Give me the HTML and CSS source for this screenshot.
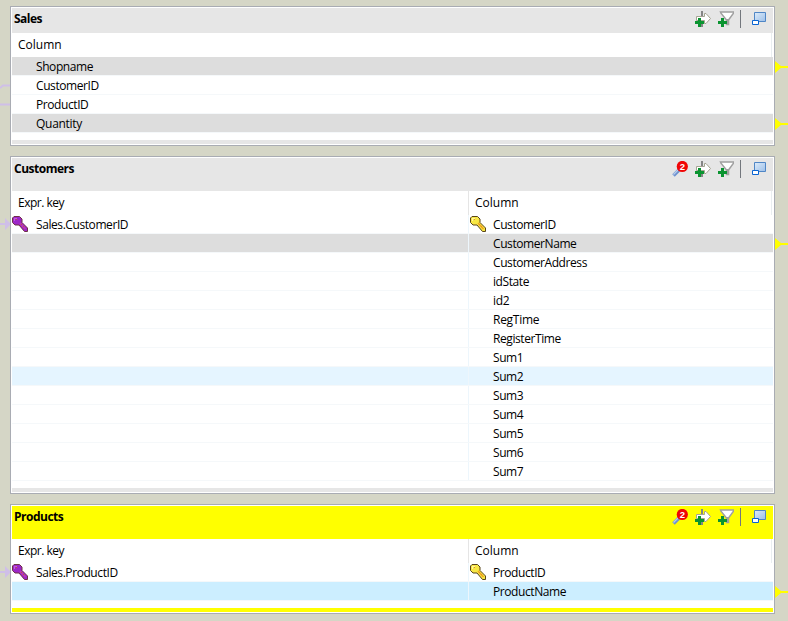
FILE: index.html
```html
<!DOCTYPE html>
<html lang="en">
<head>
<meta charset="utf-8">
<title>Tables</title>
<link rel="stylesheet" href="styles.css">
</head>
<body>
<svg class="defs" width="0" height="0">
  <defs>
    <linearGradient id="glass" x1="0" y1="0" x2="1" y2="1"><stop offset="0" stop-color="#dcebfa"/><stop offset="1" stop-color="#9dbfe8"/></linearGradient>
    <symbol id="plus" viewBox="0 0 9 9"><path d="M3 0h3v3h3v3H6v3H3V6H0V3h3z" fill="#0a9430"/></symbol>
    <symbol id="arrow" viewBox="0 0 16 16">
      <path d="M6 0h2v16H6z" fill="#858585"/>
      <path d="M1.500 5.500h8v-3h1.500l4.500 5-4.500 5H9.500v-3h-8z" fill="#fff" stroke="#a5a492"/>
      <use href="#plus" x="0" y="7" width="9" height="9"/>
    </symbol>
    <symbol id="filter" viewBox="0 0 16 16">
      <path d="M2.500 1h13v1.200L10.500 9v4.500H8.500V9L3 2.200z" fill="#fff" stroke="#a0a0a0" stroke-width="1.500"/>
      <path d="M8 8h3v6H8z" fill="#a0a0a0"/>
      <use href="#plus" x="0" y="7" width="9" height="9"/>
    </symbol>
    <symbol id="restore" viewBox="0 0 14 14">
      <path d="M2.500.5h11v9h-11z" fill="url(#glass)" stroke="#4f86c6"/>
      <path d="M.5 8.500h6v4h-6z" fill="#fff" stroke="#0a64d2"/>
    </symbol>
    <symbol id="search" viewBox="0 0 16 16">
      <path d="M1.500 14.500 7 9" stroke="#6f93cf" stroke-width="3.500"/>
      <path d="M1.500 13.500 6 9" stroke="#b9cdec" stroke-width="1.200"/>
      <circle cx="10.300" cy="5.500" r="5.600" fill="#f00505"/>
      <text x="10.300" y="8.800" class="count">2</text>
    </symbol>
    <symbol id="key" viewBox="0 0 16 16">
      <path d="M2 .5h5.500l2.500 2.500v3.500l5.500 5.500v3.500h-3L7 9H3L.5 6.500V2z" class="key-body"/>
      <path d="m8 7 5.500 6" class="key-shaft"/>
      <path d="M2 2h3v1H3v2H2z" class="key-shine"/>
      <path d="M4 3h1v1H4zM9 8h1v1H9zM11 10h1v1h-1z" class="key-dot"/>
    </symbol>
  </defs>
</svg>
<main class="canvas">
  <section class="panel">
    <header class="title"><h2>Sales</h2>
      <div class="tools"><svg class="ic"><use href="#arrow"/></svg><svg class="ic"><use href="#filter"/></svg><i class="sep"></i><svg class="ic win"><use href="#restore"/></svg></div>
    </header>
    <div class="heads"><span>Column</span></div>
    <div class="row sel"><span><b>Shopname</b></span><i class="out"></i></div>
    <div class="row"><span><b>CustomerID</b></span><svg class="wire" viewBox="0 0 10 8"><path d="M0 5 3 2.500h7"/></svg></div>
    <div class="row"><span><b>ProductID</b></span><svg class="wire" viewBox="0 0 10 8"><path d="M0 2.500h10"/></svg></div>
    <div class="row sel"><span><b class="loose">Quantity</b></span><i class="out"></i></div>
    <div class="foot"></div>
  </section>

  <section class="panel joined">
    <header class="title"><h2>Customers</h2>
      <div class="tools"><svg class="ic"><use href="#search"/></svg><svg class="ic"><use href="#arrow"/></svg><svg class="ic"><use href="#filter"/></svg><i class="sep"></i><svg class="ic win"><use href="#restore"/></svg></div>
    </header>
    <div class="heads"><span class="tight">Expr. key</span><span>Column</span></div>
    <div class="row"><span><svg class="key violet"><use href="#key"/></svg><b>Sales.CustomerID</b></span><span><svg class="key gold"><use href="#key"/></svg><b>CustomerID</b></span><i class="in"></i></div>
    <div class="row sel"><span></span><span><b>CustomerName</b></span><i class="out"></i></div>
    <div class="row"><span></span><span><b>CustomerAddress</b></span></div>
    <div class="row"><span></span><span><b>idState</b></span></div>
    <div class="row"><span></span><span><b class="loose">id2</b></span></div>
    <div class="row"><span></span><span><b class="loose">RegTime</b></span></div>
    <div class="row"><span></span><span><b>RegisterTime</b></span></div>
    <div class="row"><span></span><span><b>Sum1</b></span></div>
    <div class="row hover"><span></span><span><b>Sum2</b></span></div>
    <div class="row"><span></span><span><b>Sum3</b></span></div>
    <div class="row"><span></span><span><b>Sum4</b></span></div>
    <div class="row"><span></span><span><b>Sum5</b></span></div>
    <div class="row"><span></span><span><b>Sum6</b></span></div>
    <div class="row"><span></span><span><b>Sum7</b></span></div>
    <div class="foot"></div>
  </section>

  <section class="panel joined active">
    <header class="title"><h2>Products</h2>
      <div class="tools"><svg class="ic"><use href="#search"/></svg><svg class="ic"><use href="#arrow"/></svg><svg class="ic"><use href="#filter"/></svg><i class="sep"></i><svg class="ic win"><use href="#restore"/></svg></div>
    </header>
    <div class="heads"><span class="tight">Expr. key</span><span>Column</span></div>
    <div class="row"><span><svg class="key violet"><use href="#key"/></svg><b>Sales.ProductID</b></span><span><svg class="key gold"><use href="#key"/></svg><b>ProductID</b></span><i class="in"></i></div>
    <div class="row picked"><span></span><span><b>ProductName</b></span><i class="out"></i></div>
    <div class="foot"></div>
  </section>
</main>
</body>
</html>
```
FILE: styles.css
```css
* { box-sizing: border-box; }
body { margin: 0; background: #d5d6c6; font: 12px/18px "Open Sans", "Noto Sans", sans-serif; color: #000; overflow: hidden; }
.defs { display: block; position: absolute; }
.canvas { width: 788px; height: 621px; padding: 6px 13px 0 10px; display: flex; flex-direction: column; gap: 10px; overflow: hidden; }
.panel { --accent: #e6e6e6; background: #fff; border: 1px solid #a9acb3; padding: 1px; width: 765px; }
.active { --accent: #ffff00; }
.title { display: flex; justify-content: space-between; background: var(--accent); height: 25px; }
.joined .title { height: 33px; }
.title h2 { margin: 2px 0 0 2px; font-size: 12px; line-height: 18px; font-weight: 700; letter-spacing: -0.5px; }
.tools { display: flex; gap: 7px; padding: 3px 7px 0 0; }
.ic { width: 16px; height: 16px; display: block; }
.win { width: 14px; height: 14px; margin: 1px 0 0 4px; }
.count { font: 700 9.5px "Liberation Sans", sans-serif; fill: #fff; text-anchor: middle; }
.sep { width: 1px; height: 18px; background: #73777d; margin: -1px 0 0 -1px; }
.heads, .row { display: grid; grid-template-columns: 1fr; }
.joined .heads, .joined .row { grid-template-columns: 457px 1fr; }
.heads { height: 24px; margin-right: 1px; border-right: 1px solid #e9eef0; }
.heads span { padding: 3px 0 0 6px; }
.heads .tight { letter-spacing: -0.5px; }
.heads span + span { border-left: 1px solid #e5e5e5; margin-left: -1px; padding-left: 6px; }
.row { position: relative; height: 19px; border-bottom: 1px solid #f5f8fa; }
.row span { padding-left: 24px; height: 18px; position: relative; }
.row span + span { border-left: 1px solid #edf6fc; margin-left: -1px; }
.row b { font-weight: 400; display: block; line-height: 18px; margin-top: 1px; letter-spacing: -0.42px; }
.row .loose { letter-spacing: -0.28px; }
.sel { background: #dddddd; background-clip: padding-box; }
.hover { background: #e5f5ff; background-clip: padding-box; }
.picked { background: #cceeff; background-clip: padding-box; }
.key { position: absolute; left: 0; top: 1px; width: 16px; height: 16px; }
.gold { left: 1px; }
.violet { --body: #9c27c8; --edge: #6e3247; --shaft: #c33cb4; --shine: #c65cdb; --dot: #c05a38; }
.gold { --body: #f7e745; --edge: #59451b; --shaft: #f2a51d; --shine: #fff7a0; --dot: #e8882a; }
.key-body { fill: var(--body); stroke: var(--edge); }
.key-shaft { stroke: var(--shaft); stroke-width: 1.500; }
.key-shine { fill: var(--shine); }
.key-dot { fill: var(--dot); }
.foot { height: 4px; margin-top: 7px; background: var(--accent); }
.out, .in, .wire { position: absolute; }
.out { left: 763px; top: 4px; width: 13px; height: 12px; background: #ffff00; clip-path: polygon(0 0, 6px 5px, 100% 5px, 100% 7px, 6px 7px, 0 100%); }
.in { left: -12px; top: 3px; width: 10px; height: 12px; background: #cfbfe8; clip-path: polygon(0 5px, 5px 5px, 5px 0, 100% 5px, 100% 7px, 5px 100%, 5px 7px, 0 7px); }
.wire { left: -12px; top: 7px; width: 10px; height: 8px; fill: none; stroke: #cfbfe8; stroke-width: 2; }
```
